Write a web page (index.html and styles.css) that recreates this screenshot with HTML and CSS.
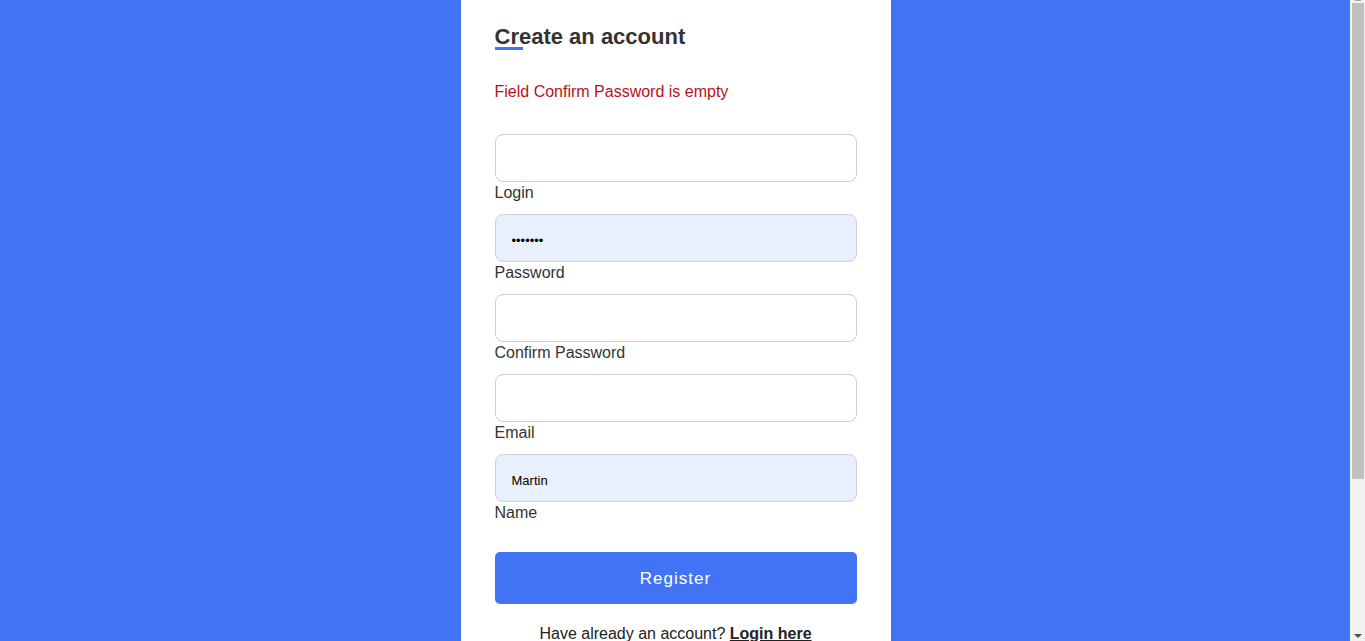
FILE: index.html
```html
<!DOCTYPE html>
<html lang="en">
<head>
<meta charset="utf-8">
<title>Create an account</title>
<link rel="stylesheet" href="styles.css">
</head>
<body>
<div class="screen">
  <div class="page">
    <main class="card">
      <h2 class="title">Create an account</h2>
      <p class="error">Field Confirm Password is empty</p>
      <form class="form">
        <div class="field">
          <input class="input" type="text" id="login">
          <label class="label" for="login">Login</label>
        </div>
        <div class="field">
          <input class="input autofill" type="password" id="password" value="1234567">
          <label class="label" for="password">Password</label>
        </div>
        <div class="field">
          <input class="input" type="password" id="confirm">
          <label class="label" for="confirm">Confirm Password</label>
        </div>
        <div class="field">
          <input class="input" type="email" id="email">
          <label class="label" for="email">Email</label>
        </div>
        <div class="field">
          <input class="input autofill" type="text" id="name" value="Martin">
          <label class="label" for="name">Name</label>
        </div>
        <button class="button" type="button">Register</button>
      </form>
      <p class="switch">Have already an account? <a class="switch-link" href="#">Login here</a></p>
    </main>
  </div>
  <div class="scrollbar" aria-hidden="true">
    <div class="scroll-up"></div>
    <div class="scroll-thumb"></div>
    <div class="scroll-space"></div>
    <div class="scroll-down"></div>
  </div>
</div>
</body>
</html>
```
FILE: styles.css
```css
html, body {
  margin: 0;
  padding: 0;
}
body {
  font-family: "Liberation Sans", Arial, sans-serif;
  color: #333;
  background: #4273f4;
}
.screen {
  display: flex;
  height: 641px;
  overflow: hidden;
}
.page {
  flex: 1;
  min-width: 0;
  background: #4273f4;
  display: flex;
  justify-content: center;
  align-items: flex-start;
  padding-left: 1px;
  overflow: hidden;
}
.scrollbar {
  box-sizing: border-box;
  flex: none;
  width: 15px;
  height: 641px;
  background: #f1f1f1;
  display: flex;
  flex-direction: column;
  padding: 0 1px 0 2px;
}
.scroll-up {
  flex: none;
  align-self: center;
  width: 6px;
  height: 1px;
  background: #a8a8a8;
  margin-bottom: 2px;
}
.scroll-thumb {
  flex: none;
  height: 476px;
  background: #c1c1c1;
}
.scroll-space {
  flex: 1;
}
.scroll-down {
  flex: none;
  align-self: center;
  width: 0;
  height: 0;
  border-left: 4px solid transparent;
  border-right: 4px solid transparent;
  border-top: 4px solid #505050;
  margin-bottom: 3px;
}
.card {
  box-sizing: border-box;
  flex: none;
  width: 430px;
  background: #fff;
  padding: 24px 34px 194px;
  display: flex;
  flex-direction: column;
}
.title {
  position: relative;
  margin: 0;
  font-size: 22px;
  line-height: 25px;
  font-weight: bold;
  color: #333;
}
.title::after {
  content: "";
  position: absolute;
  left: 0;
  top: 23px;
  width: 28px;
  height: 3px;
  background: #4273f4;
}
.error {
  margin: 34px 0 0;
  font-size: 16px;
  line-height: 18px;
  color: #b5121b;
}
.form {
  margin-top: 33px;
  display: flex;
  flex-direction: column;
}
.field {
  display: flex;
  flex-direction: column;
  margin-bottom: 10px;
}
.input {
  box-sizing: border-box;
  width: 100%;
  height: 48px;
  border: 1px solid #cfcfcf;
  border-radius: 8px;
  padding: 4px 16px 0;
  font-family: "Liberation Sans", Arial, sans-serif;
  font-size: 13px;
  color: #000;
  background: #fff;
  outline: none;
}
.input.autofill {
  background: #e8f0fe;
}
.label {
  font-size: 16px;
  line-height: 22px;
  color: #333;
}
.button {
  margin-top: 18px;
  height: 52px;
  border: none;
  border-radius: 5px;
  padding: 1px 0 0;
  background: #4273f4;
  color: #fff;
  font-family: "Liberation Sans", Arial, sans-serif;
  font-size: 17px;
  letter-spacing: 1px;
  cursor: pointer;
}
.switch {
  margin: 21px 0 0;
  text-align: center;
  font-size: 16px;
  line-height: 18px;
  color: #222;
}
.switch-link {
  color: #222;
  font-weight: bold;
  text-decoration: underline;
}
```
